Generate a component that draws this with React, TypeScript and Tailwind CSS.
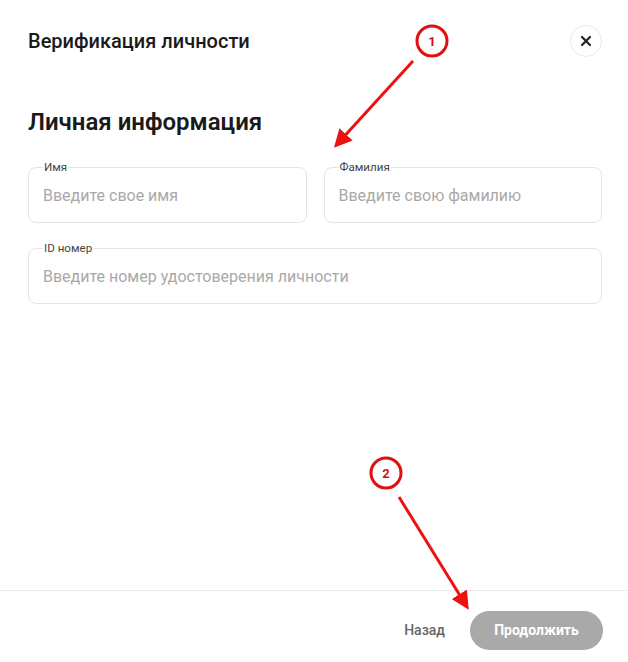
import React from "react";

function Field({ label, placeholder, className }: { label: string; placeholder: string; className?: string }) {
  return (
    <fieldset className={"rounded-lg border border-[#e4e4e4] px-[14px] pb-[15px] " + (className ?? "")}>
      <legend className="px-px text-[11.6px] leading-[13px] text-[#444]">{label}</legend>
      <input
        className="block w-full text-[16px] leading-[22px] text-[#333] outline-none placeholder:text-[#a9a9a9] mt-[11px]"
        placeholder={placeholder}
      />
    </fieldset>
  );
}

export default function App() {
  return (
    <div className="relative flex h-[662px] w-[628px] flex-col bg-white font-['Roboto',sans-serif]">
      <div className="flex-1 pl-7 pr-[26px]">
        <div className="flex h-[82px] items-center justify-between pb-[1px]">
          <h1 className="text-[20px] font-medium text-[#1a1a1a]">Верификация личности</h1>
          <button className="flex h-8 w-8 items-center justify-center rounded-full border border-[#eaeaea] text-[#222]">
            <svg width="12" height="12" viewBox="0 0 12 12" fill="none" stroke="currentColor" strokeWidth="2.2" strokeLinecap="round">
              <path d="M2 2L10 10M10 2L2 10" />
            </svg>
          </button>
        </div>
        <h2 className="mt-[25px] text-[24px] font-semibold leading-[30px] text-[#1a1a1a]">Личная информация</h2>
        <div className="mt-[24px] grid grid-cols-2 gap-x-[17px]">
          <Field label="Имя" placeholder="Введите свое имя" />
          <Field label="Фамилия" placeholder="Введите свою фамилию" />
        </div>
        <Field className="mt-[19px]" label="ID номер" placeholder="Введите номер удостоверения личности" />
      </div>
      <div className="flex h-[72px] items-center justify-end gap-[25px] border-t border-[#ececec] pl-[25px] pr-[25px] pt-[8px]">
        <button className="text-[14px] font-medium text-[#666]">Назад</button>
        <button className="h-[39px] w-[133px] rounded-full bg-[#a9a9a9] text-[14px] font-bold text-white">Продолжить</button>
      </div>

      <svg className="pointer-events-none absolute left-0 top-0" width="628" height="662" viewBox="0 0 628 662">
        <defs>
          <marker id="ah" markerWidth="6" markerHeight="6" refX="3" refY="3" orient="auto" markerUnits="strokeWidth">
            <path d="M0,0 L6,3 L0,6 Z" fill="#ee1111" />
          </marker>
        </defs>
        <circle cx="432" cy="41" r="15" fill="white" stroke="#e01010" strokeWidth="3" />
        <text x="432" y="46" textAnchor="middle" fontSize="13" fontWeight="700" fill="#d01010" fontFamily="Roboto, sans-serif">1</text>
        <line x1="413" y1="61" x2="340" y2="141" stroke="#ee1111" strokeWidth="3" markerEnd="url(#ah)" />
        <circle cx="386" cy="473" r="15" fill="white" stroke="#e01010" strokeWidth="3" />
        <text x="386" y="478" textAnchor="middle" fontSize="13" fontWeight="700" fill="#d01010" fontFamily="Roboto, sans-serif">2</text>
        <line x1="399" y1="497" x2="464" y2="602" stroke="#ee1111" strokeWidth="3" markerEnd="url(#ah)" />
      </svg>
    </div>
  );
}
